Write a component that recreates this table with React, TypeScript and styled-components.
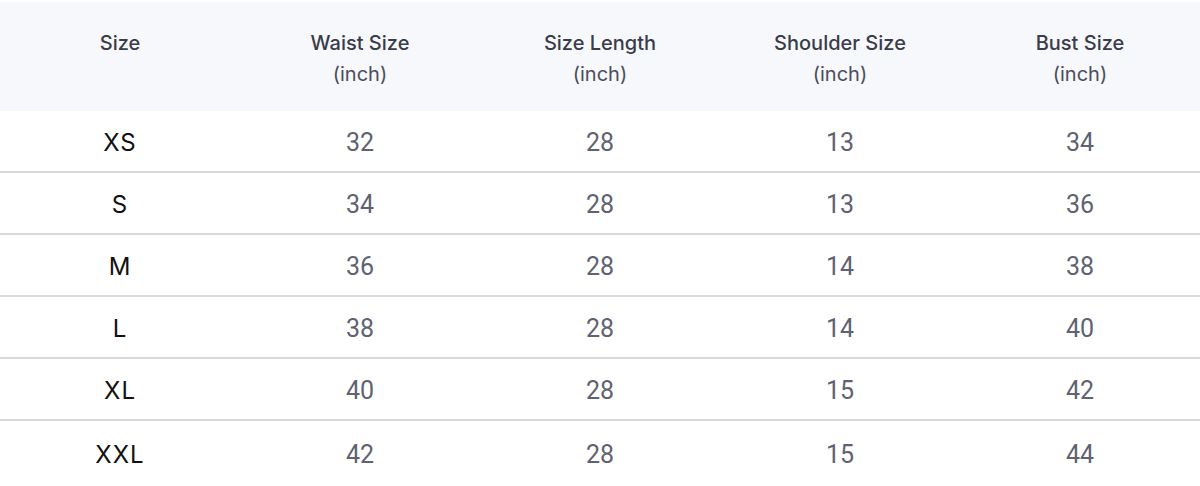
import React from 'react'
import styled, { createGlobalStyle } from 'styled-components'

const GlobalStyle = createGlobalStyle`
  html, body {
    margin: 0;
    padding: 0;
    background: #ffffff;
  }
  body {
    font-family: Inter, 'Noto Sans', sans-serif;
  }
`

const Page = styled.div`
  width: 1200px;
  padding-top: 2px;
  background: #ffffff;
`

const Table = styled.div`
  display: flex;
  flex-direction: column;
`

const HeaderRow = styled.div`
  display: grid;
  grid-template-columns: repeat(5, 1fr);
  background: #f7f8fc;
  padding: 26px 0 21px;
  height: 109px;
  box-sizing: border-box;
`

const HeaderCell = styled.div`
  display: flex;
  flex-direction: column;
  align-items: center;
  font-family: Inter, sans-serif;
  font-size: 20px;
  font-weight: 500;
  line-height: 31px;
  color: #3a3c49;
`

const Unit = styled.span`
  font-weight: 400;
  color: #4b4d5a;
`

const Row = styled.div<{ $last?: boolean }>`
  display: grid;
  grid-template-columns: repeat(5, 1fr);
  align-items: center;
  height: ${({ $last }) => ($last ? '64px' : '60px')};
  border-bottom: ${({ $last }) => ($last ? 'none' : '2px solid #d9d9dc')};
`

const SizeCell = styled.div`
  text-align: center;
  font-family: Inter, sans-serif;
  font-size: 24px;
  font-weight: 400;
  color: #111111;
  letter-spacing: 1px;
  padding-top: 3px;
`

const ValueCell = styled.div`
  text-align: center;
  font-family: Roboto, sans-serif;
  font-size: 25px;
  font-weight: 400;
  color: #5f6272;
  padding-top: 3px;
`

const columns = [
  { title: 'Size' },
  { title: 'Waist Size', unit: '(inch)' },
  { title: 'Size Length', unit: '(inch)' },
  { title: 'Shoulder Size', unit: '(inch)' },
  { title: 'Bust Size', unit: '(inch)' },
]

const rows = [
  { size: 'XS', values: [32, 28, 13, 34] },
  { size: 'S', values: [34, 28, 13, 36] },
  { size: 'M', values: [36, 28, 14, 38] },
  { size: 'L', values: [38, 28, 14, 40] },
  { size: 'XL', values: [40, 28, 15, 42] },
  { size: 'XXL', values: [42, 28, 15, 44] },
]

const App: React.FC = () => {
  return (
    <Page>
      <GlobalStyle />
      <Table>
        <HeaderRow>
          {columns.map((col) => (
            <HeaderCell key={col.title}>
              <span>{col.title}</span>
              {col.unit && <Unit>{col.unit}</Unit>}
            </HeaderCell>
          ))}
        </HeaderRow>
        {rows.map((row, i) => (
          <Row key={row.size} $last={i === rows.length - 1}>
            <SizeCell>{row.size}</SizeCell>
            {row.values.map((v, j) => (
              <ValueCell key={j}>{v}</ValueCell>
            ))}
          </Row>
        ))}
      </Table>
    </Page>
  )
}

export default App
